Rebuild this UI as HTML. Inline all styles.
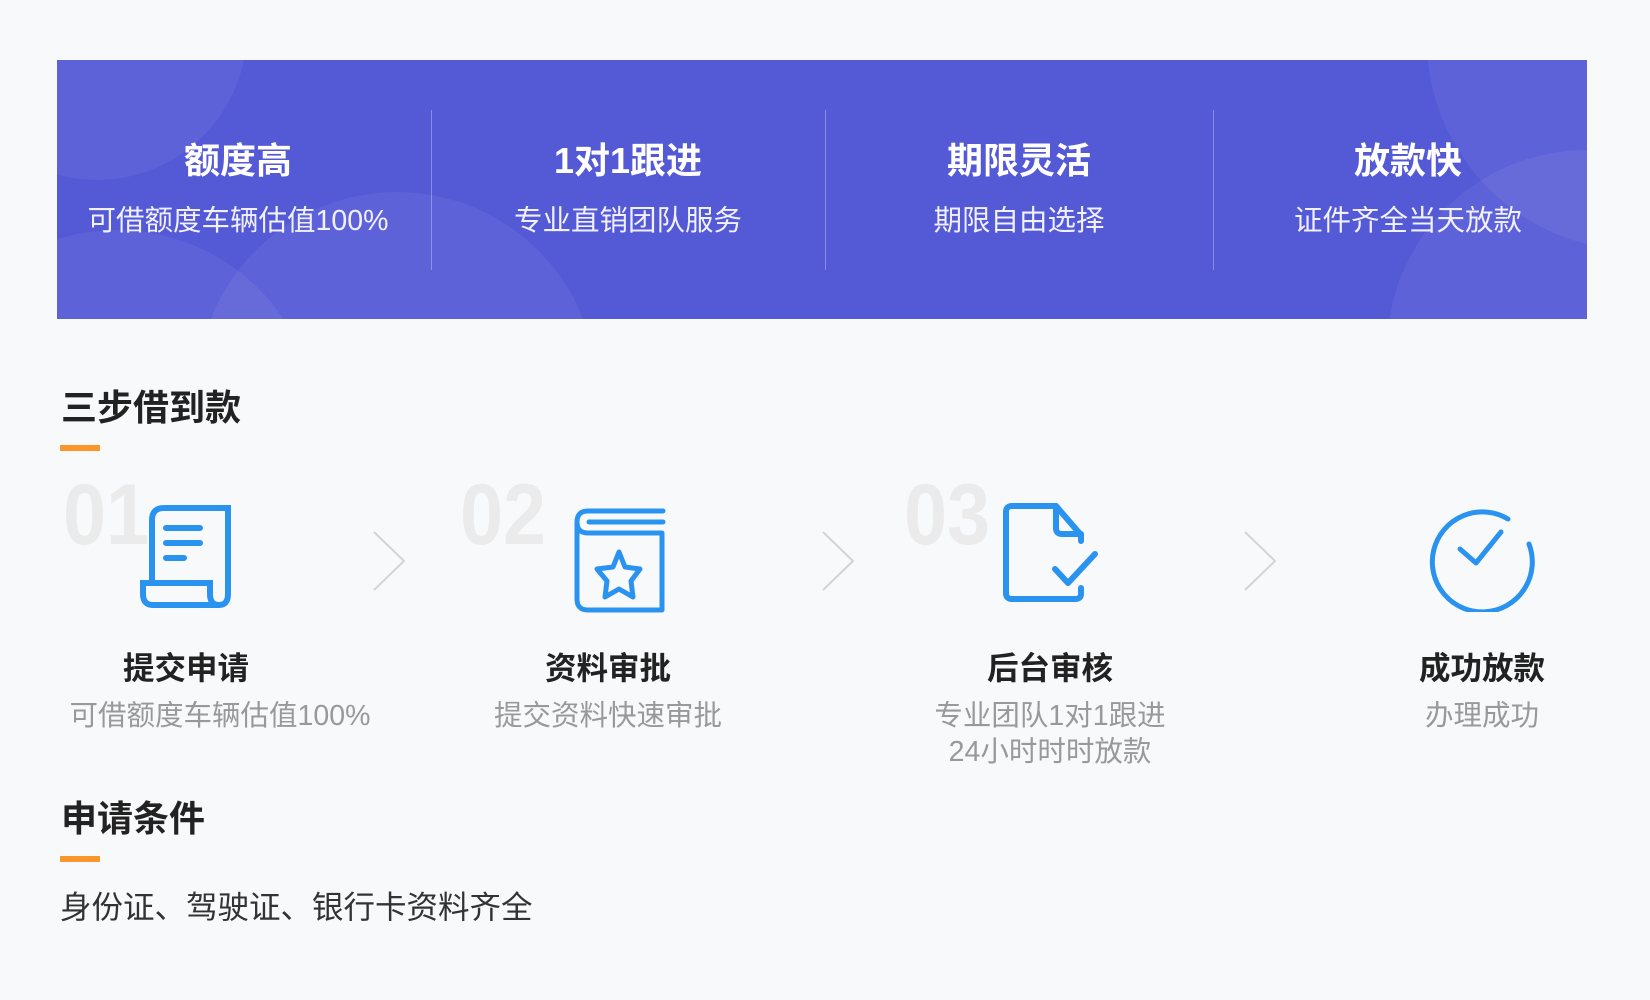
<!DOCTYPE html>
<html><head><meta charset="utf-8"><style>
*{margin:0;padding:0;box-sizing:border-box}
body{width:1650px;height:1000px;background:#f8f9fb;font-family:"Liberation Sans","Noto Sans CJK SC",sans-serif;position:relative;overflow:hidden}
.banner{position:absolute;left:57px;top:60px;width:1530px;height:259px;background:#5459d6;overflow:hidden}
.circ{position:absolute;border-radius:50%;background:rgba(255,255,255,0.06)}
.col{position:absolute;top:0;height:259px;text-align:center;color:#fff}
.col h3{position:absolute;left:0;right:0;top:80px;font-size:36px;font-weight:bold;line-height:42px}
.col p{position:absolute;left:0;right:0;top:144px;font-size:28.5px;line-height:34px;color:#f0f0ff}
.div{position:absolute;top:50px;width:1px;height:160px;background:rgba(255,255,255,0.3)}
.h2{position:absolute;left:61px;font-size:36px;font-weight:bold;color:#222;line-height:42px}
.bar{position:absolute;left:60px;width:40px;height:6px;background:#fa962b}
.num{position:absolute;top:465px;font-family:"Liberation Sans",sans-serif;font-weight:bold;font-size:86px;color:#ebebeb;line-height:100px;transform:scaleX(0.9);transform-origin:0 0}
.st{position:absolute;width:400px;text-align:center;font-size:31.5px;font-weight:bold;color:#222;top:649px;line-height:38px}
.sd{position:absolute;width:400px;text-align:center;font-size:28.5px;color:#999;top:698px;line-height:36px}
svg{position:absolute}
</style></head><body>
<div class="banner">
<div class="circ" style="left:-110px;top:-180px;width:300px;height:300px"></div>
<div class="circ" style="left:140px;top:132px;width:400px;height:400px"></div>
<div class="circ" style="left:-140px;top:170px;width:400px;height:400px"></div>
<div class="circ" style="left:1370px;top:-230px;width:420px;height:420px"></div>
<div class="circ" style="left:1330px;top:90px;width:400px;height:400px"></div>
<div class="col" style="left:0;width:362px"><h3>额度高</h3><p>可借额度车辆估值100%</p></div>
<div class="div" style="left:374px"></div>
<div class="col" style="left:374px;width:394px"><h3>1对1跟进</h3><p>专业直销团队服务</p></div>
<div class="div" style="left:768px"></div>
<div class="col" style="left:768px;width:388px"><h3>期限灵活</h3><p>期限自由选择</p></div>
<div class="div" style="left:1156px"></div>
<div class="col" style="left:1156px;width:390px"><h3>放款快</h3><p>证件齐全当天放款</p></div>
</div>

<div class="h2" style="top:387px">三步借到款</div>
<div class="bar" style="top:445px"></div>

<div class="num" style="left:63px">01</div>
<div class="num" style="left:460px">02</div>
<div class="num" style="left:904px">03</div>

<svg style="left:140px;top:503px" width="95" height="108" viewBox="0 0 95 108" fill="none" stroke="#2a93ef" stroke-width="6">
<path d="M12 83V17Q12 5 24 5H88V91Q88 102 79 102Q70 102 70 91V80H3V91Q3 102 13 102H79"/>
<path d="M26 25H60M26 40H60M26 55H44" stroke-linecap="round"/>
</svg>
<svg style="left:573px;top:507px" width="95" height="108" viewBox="0 0 95 108" fill="none" stroke="#2a93ef" stroke-width="5" stroke-linecap="round" stroke-linejoin="round">
<path d="M90 4H15Q4 4 4 15Q4 26 15 26H89V103H15Q4 103 4 92V15"/>
<path d="M16 15H90"/>
<path d="M46 45L52 60L67 62L58 74L60 90L46 82L32 90L34 74L24 62L40 60Z"/>
</svg>
<svg style="left:1001px;top:501px" width="106" height="106" viewBox="0 0 106 106" fill="none" stroke="#2a93ef" stroke-width="6" stroke-linecap="round" stroke-linejoin="round">
<path d="M52 98H11Q5 98 5 92V11Q5 5 11 5H55L80 34V40M80 87V93Q80 98 74 98H52"/>
<path d="M55 5V27Q55 33 61 33H80"/>
<path d="M54 68L67 82L94 53"/>
</svg>
<svg style="left:1428px;top:506px" width="110" height="106" viewBox="0 0 110 106" fill="none" stroke="#2a93ef" stroke-width="5" stroke-linecap="round" stroke-linejoin="round">
<path d="M80 13A50 50 0 1 0 101 38"/>
<path d="M32 43L48 57L73 26"/>
</svg>

<svg style="left:372px;top:530px" width="36" height="62" fill="none" stroke="#d4d4d4" stroke-width="2"><path d="M2 2L32 31L2 60"/></svg>
<svg style="left:821px;top:530px" width="36" height="62" fill="none" stroke="#d4d4d4" stroke-width="2"><path d="M2 2L32 31L2 60"/></svg>
<svg style="left:1243px;top:530px" width="36" height="62" fill="none" stroke="#d4d4d4" stroke-width="2"><path d="M2 2L32 31L2 60"/></svg>

<div class="st" style="left:-14px">提交申请</div>
<div class="sd" style="left:20px">可借额度车辆估值100%</div>
<div class="st" style="left:408px">资料审批</div>
<div class="sd" style="left:408px">提交资料快速审批</div>
<div class="st" style="left:850px">后台审核</div>
<div class="sd" style="left:850px">专业团队1对1跟进<br>24小时时时放款</div>
<div class="st" style="left:1282px">成功放款</div>
<div class="sd" style="left:1282px">办理成功</div>

<div class="h2" style="top:798px">申请条件</div>
<div class="bar" style="top:856px"></div>
<div style="position:absolute;left:60px;top:888px;font-size:31.5px;color:#333;line-height:38px">身份证、驾驶证、银行卡资料齐全</div>
</body></html>
